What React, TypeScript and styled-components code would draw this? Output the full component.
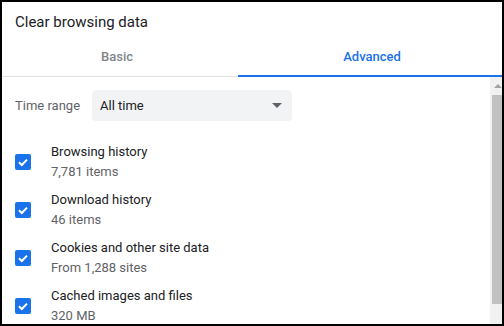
import React from "react";
import styled, { createGlobalStyle } from "styled-components";

const GlobalStyle = createGlobalStyle`
  html, body {
    margin: 0;
    padding: 0;
    background: #fff;
  }
  body {
    font-family: Roboto, "Liberation Sans", Arial, sans-serif;
  }
`;

const Dialog = styled.div`
  width: 504px;
  height: 326px;
  box-sizing: border-box;
  border: 2px solid #000;
  background: #fff;
  display: flex;
  flex-direction: column;
  overflow: hidden;
`;

const Title = styled.div`
  padding: 10px 0 0 13px;
  height: 22px;
  font-size: 15px;
  line-height: 20px;
  color: #202124;
`;

const Tabs = styled.div`
  display: flex;
  height: 42px;
  border-bottom: 1px solid #e0e0e0;
`;

// $shift nudges the label off the tab centre (negative = left)
const Tab = styled.div<{ $active?: boolean; $width?: string; $shift?: number }>`
  position: relative;
  flex: ${(p) => (p.$width ? `0 0 ${p.$width}` : "1")};
  display: flex;
  align-items: center;
  justify-content: center;
  padding-top: 2px;
  padding-left: ${(p) => Math.max(0, (p.$shift || 0) * 2)}px;
  padding-right: ${(p) => Math.max(0, -(p.$shift || 0) * 2)}px;
  box-sizing: border-box;
  font-size: 13px;
  font-weight: 500;
  color: ${(p) => (p.$active ? "#1a73e8" : "#80868b")};

  &::after {
    content: "";
    display: ${(p) => (p.$active ? "block" : "none")};
    position: absolute;
    left: 0;
    right: 0;
    bottom: -1px;
    height: 2px;
    background: #1a73e8;
  }
`;

const Body = styled.div`
  flex: 1;
  display: flex;
  min-height: 0;
`;

const Content = styled.div`
  flex: 1;
  padding: 13px 0 0 13px;
  display: flex;
  flex-direction: column;
`;

const RangeRow = styled.div`
  display: flex;
  align-items: center;
  margin-bottom: 21px;
`;

const RangeLabel = styled.span`
  width: 77px;
  font-size: 13px;
  color: #5f6368;
`;

const Select = styled.div`
  width: 200px;
  height: 31px;
  box-sizing: border-box;
  border-radius: 4px;
  background: #f1f3f4;
  display: flex;
  align-items: center;
  justify-content: space-between;
  padding: 0 10px 0 8px;
  font-size: 13px;
  color: #202124;
`;

const Caret = styled.span`
  width: 0;
  height: 0;
  border-left: 5px solid transparent;
  border-right: 5px solid transparent;
  border-top: 5px solid #5f6368;
`;

const Item = styled.div`
  display: flex;
  align-items: center;
  gap: 20px;
  margin-bottom: 8px;
`;

const Box = styled.span`
  width: 16px;
  height: 16px;
  border-radius: 2px;
  background: #1a73e8;
  display: flex;
  align-items: center;
  justify-content: center;
  flex: 0 0 16px;
`;

const Texts = styled.div`
  display: flex;
  flex-direction: column;
  font-size: 13px;
  line-height: 20px;
`;

const Primary = styled.span`
  color: #202124;
`;

const Secondary = styled.span`
  color: #5f6368;
`;

const Track = styled.div`
  width: 12px;
  background: #f1f1f1;
  display: flex;
  flex-direction: column;
  align-items: flex-end;
`;

const ArrowArea = styled.div`
  height: 18px;
  width: 10px;
  display: flex;
  align-items: center;
  justify-content: center;
`;

const UpArrow = styled.span`
  width: 0;
  height: 0;
  border-left: 4px solid transparent;
  border-right: 4px solid transparent;
  border-bottom: 4px solid #a3a3a3;
  margin-left: 2px;
`;

const Thumb = styled.div`
  width: 10px;
  height: 209px;
  background: #c1c1c1;
`;

const items = [
  { label: "Browsing history", detail: "7,781 items" },
  { label: "Download history", detail: "46 items" },
  { label: "Cookies and other site data", detail: "From 1,288 sites" },
  { label: "Cached images and files", detail: "320 MB" },
];

function Check() {
  return (
    <Box>
      <svg width="12" height="12" viewBox="0 0 12 12">
        <path d="M2 6.2 L4.8 9 L10 3.6" fill="none" stroke="#fff" strokeWidth="2" />
      </svg>
    </Box>
  );
}

export default function App() {
  return (
    <>
      <GlobalStyle />
      <Dialog>
        <Title>Clear browsing data</Title>
        <Tabs>
          <Tab $width="236px" $shift={-3}>Basic</Tab>
          <Tab $active $shift={2}>Advanced</Tab>
        </Tabs>
        <Body>
          <Content>
            <RangeRow>
              <RangeLabel>Time range</RangeLabel>
              <Select>
                All time
                <Caret />
              </Select>
            </RangeRow>
            {items.map((it) => (
              <Item key={it.label}>
                <Check />
                <Texts>
                  <Primary>{it.label}</Primary>
                  <Secondary>{it.detail}</Secondary>
                </Texts>
              </Item>
            ))}
          </Content>
          <Track>
            <ArrowArea>
              <UpArrow />
            </ArrowArea>
            <Thumb />
          </Track>
        </Body>
      </Dialog>
    </>
  );
}
